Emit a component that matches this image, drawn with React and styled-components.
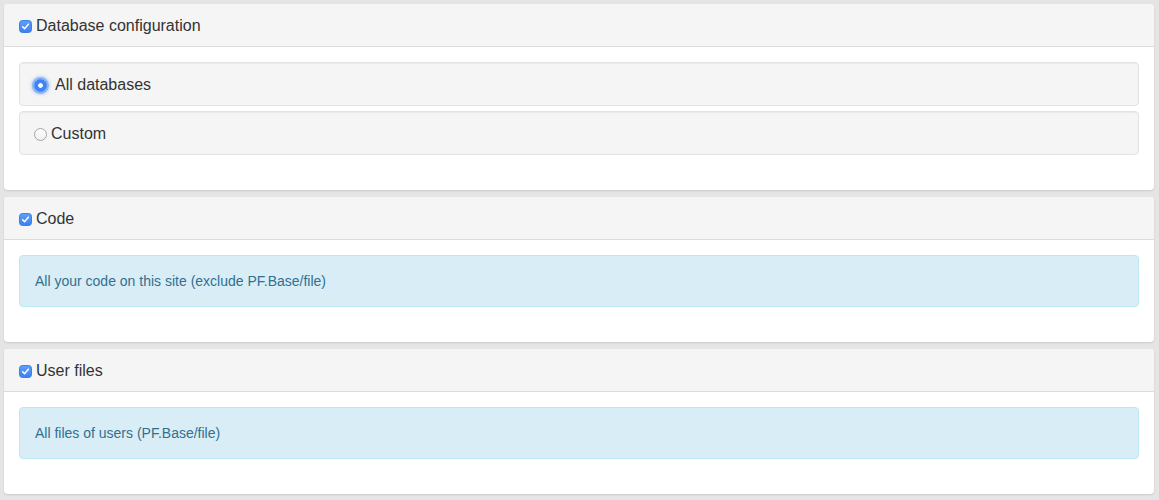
import React from "react";
import styled, { createGlobalStyle } from "styled-components";

const GlobalStyle = createGlobalStyle`
  html, body {
    margin: 0;
    padding: 0;
    background: #e5e5e5;
  }
  body {
    font-family: "Liberation Sans", Arial, Helvetica, sans-serif;
    color: #333;
  }
`;

const sections = [
  {
    id: "db",
    title: "Database configuration",
    options: [
      { id: "all", label: "All databases", checked: true },
      { id: "custom", label: "Custom", checked: false },
    ],
  },
  { id: "code", title: "Code", info: "All your code on this site (exclude PF.Base/file)" },
  { id: "files", title: "User files", info: "All files of users (PF.Base/file)" },
];

const CheckIcon = () => (
  <svg width="13" height="13" viewBox="0 0 13 13">
    <defs>
      <linearGradient id="cbg" x1="0" y1="0" x2="0" y2="1">
        <stop offset="0" stopColor="#5ea0fa" />
        <stop offset="1" stopColor="#3a7ff3" />
      </linearGradient>
    </defs>
    <rect x="0.5" y="0.5" width="12" height="12" rx="3" fill="url(#cbg)" stroke="#3d7fe6" />
    <path d="M3.6 6.8 L5.6 8.8 L9.4 4.2" fill="none" stroke="#fff" strokeWidth="1.5" strokeLinecap="round" strokeLinejoin="round" />
  </svg>
);

const Panel = ({ section }) => (
  <PanelBox>
    <PanelHeading>
      <CheckIcon />
      <span>{section.title}</span>
    </PanelHeading>
    <PanelBody>
      {section.options &&
        section.options.map((opt, i) => (
          <Well key={opt.id} last={i === section.options.length - 1}>
            <Radio checked={opt.checked} />
            <span>{opt.label}</span>
          </Well>
        ))}
      {section.info && <InfoAlert>{section.info}</InfoAlert>}
    </PanelBody>
  </PanelBox>
);

const App = () => (
  <>
    <GlobalStyle />
    <Page>
      {sections.map((s) => (
        <Panel key={s.id} section={s} />
      ))}
    </Page>
  </>
);

export default App;

const Page = styled.div`
  padding: 4px 5px 0 4px;
`;

const PanelBox = styled.div`
  background: #fff;
  border-radius: 4px;
  box-shadow: 0 1px 2px rgba(0, 0, 0, 0.12);
  margin-bottom: 7px;
  overflow: hidden;
`;

const PanelHeading = styled.div`
  display: flex;
  align-items: center;
  gap: 4px;
  padding: 11px 15px 9px;
  line-height: 22px;
  font-size: 16px;
  background: #f5f5f5;
  border-bottom: 1px solid #dcdcdc;

  svg {
    flex-shrink: 0;
    margin-top: 1px;
  }
`;

const PanelBody = styled.div`
  padding: 15px;
`;

const Well = styled.div`
  display: flex;
  align-items: center;
  padding: 11px 14px 9px;
  line-height: 22px;
  font-size: 16px;
  background: #f5f5f5;
  border: 1px solid #e3e3e3;
  border-radius: 4px;
  box-shadow: inset 0 1px 1px rgba(0, 0, 0, 0.05);
  margin-bottom: ${(p) => (p.last ? "20px" : "5px")};
`;

const Radio = styled.span`
  box-sizing: border-box;
  width: 13px;
  height: 13px;
  border-radius: 50%;
  flex-shrink: 0;
  margin: 0 ${(p) => (p.checked ? "8px" : "4px")} 0 0;
  ${(p) =>
    p.checked
      ? `
    background: radial-gradient(circle, #fff 0 2px, #3d86f4 2.6px);
    border: 1px solid #3a7ee6;
    box-shadow: 0 0 0 2px rgba(90, 150, 245, 0.55), 0 0 3px 3px rgba(90, 150, 245, 0.35);
  `
      : `
    background: linear-gradient(#fff, #f0f0f0);
    border: 1px solid #a6a6a6;
  `}
`;

const InfoAlert = styled.div`
  padding: 15px;
  font-size: 14px;
  line-height: 20px;
  color: #31708f;
  background: #d9edf7;
  border: 1px solid #bce8f1;
  border-radius: 4px;
  margin-bottom: 20px;
`;
